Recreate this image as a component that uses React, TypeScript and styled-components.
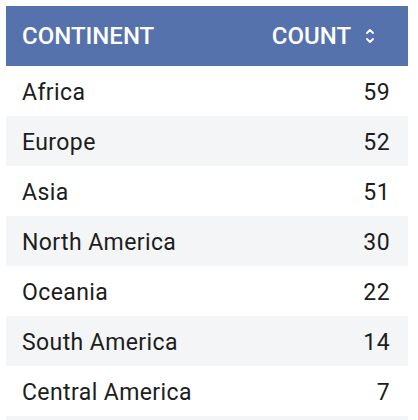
import React from "react";
import styled, { createGlobalStyle } from "styled-components";

const Global = createGlobalStyle`
  html, body { margin: 0; padding: 0; background: #ffffff; }
  body { padding: 6px; font-family: Roboto, "Liberation Sans", sans-serif; }
`;

const Table = styled.div`
  width: 402px;
  display: flex;
  flex-direction: column;
`;

const Header = styled.div`
  height: 60px;
  background: #5672ad;
  color: #ffffff;
  display: flex;
  align-items: center;
  justify-content: space-between;
  padding: 0 34px 0 16px;
  font-size: 24px;
  font-weight: 500;
`;

const SortCell = styled.div`
  display: flex;
  align-items: center;
  gap: 15px;
`;

const Row = styled.div<{ $striped: boolean }>`
  height: 50px;
  background: ${(p) => (p.$striped ? "#f4f5f7" : "#ffffff")};
  display: flex;
  align-items: center;
  justify-content: space-between;
  padding: 2px 18px 0 16px;
  box-sizing: border-box;
  color: #1c1d20;
  font-size: 23px;
  letter-spacing: 0.4px;
`;

const data: [string, number][] = [
  ["Africa", 59],
  ["Europe", 52],
  ["Asia", 51],
  ["North America", 30],
  ["Oceania", 22],
  ["South America", 14],
  ["Central America", 7],
];

const SortIcon = () => (
  <svg width="8" height="16" viewBox="0 0 8 16" fill="none" stroke="#ffffff" strokeWidth="1.8" strokeLinecap="round" strokeLinejoin="round">
    <polyline points="1,5 4,2 7,5" />
    <polyline points="1,11 4,14 7,11" />
  </svg>
);

export default function App() {
  return (
    <>
      <Global />
      <Table>
        <Header>
          <span>CONTINENT</span>
          <SortCell>
            <span>COUNT</span>
            <SortIcon />
          </SortCell>
        </Header>
        {data.map(([name, count], i) => (
          <Row key={name} $striped={i % 2 === 1}>
            <span>{name}</span>
            <span>{count}</span>
          </Row>
        ))}
        <Row $striped={true} />
      </Table>
    </>
  );
}
